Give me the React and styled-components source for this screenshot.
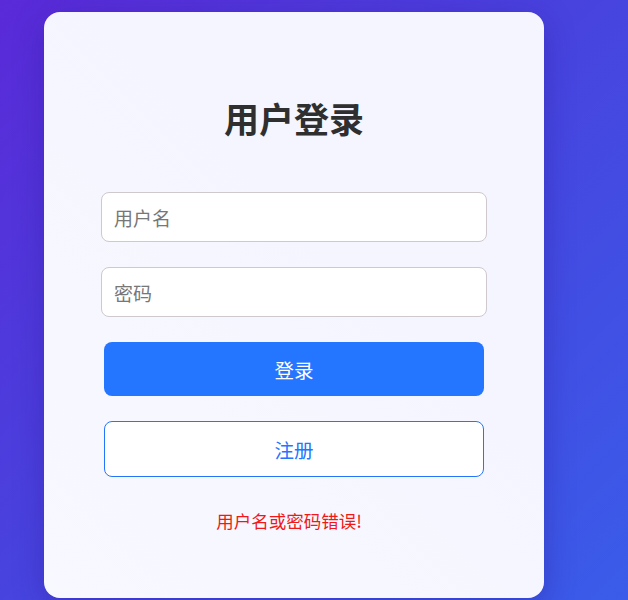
import React, { useState } from 'react'
import styled, { createGlobalStyle } from 'styled-components'

const GlobalStyle = createGlobalStyle`
html, body {
margin:0;
padding:0;
height:100%;
}
body {
font-family:"Noto Sans CJK SC", "Noto Sans", sans-serif;
background:linear-gradient(135deg, #5a2ad8 0%, #4744df 50%, #3a5ce9 100%);
min-height:600px;
}
`

const Page = styled.div`
display:flex;
justify-content:flex-start;
padding:12px 0 0 44px;
box-sizing:border-box;
height:600px;
overflow:hidden;
`

const Card = styled.div`
width:500px;
height:586px;
box-sizing:border-box;
background:linear-gradient(45deg, #f8f9ff 0%, #f5f5ff 60%);
border-radius:16px;
box-shadow:0 8px 30px rgba(40, 20, 140, 0.35);
display:flex;
flex-direction:column;
align-items:center;
padding-top:85px;
`

const Title = styled.h2`
margin:0 0 53px;
font-size:35px;
line-height:42px;
font-weight:700;
color:#2f2f2f;
`

const Form = styled.form`
display:flex;
flex-direction:column;
align-items:center;
gap:25px;
`

const Input = styled.input`
width:386px;
height:50px;
box-sizing:border-box;
padding:0 12px;
border:1px solid #cfc8cc;
border-radius:8px;
background:#fff;
font-family:inherit;
font-size:19px;
color:#333;
outline:none;
&::placeholder {
color:#777;
}
`

const Button = styled.button`
width:380px;
height:${p => (p.$primary ? '54px' : '56px')};
box-sizing:border-box;
border-radius:8px;
font-family:inherit;
font-size:19.5px;
cursor:pointer;
border:${p => (p.$primary ? 'none' : '1px solid #2475fb')};
background:${p => (p.$primary ? '#2475ff' : '#fff')};
color:${p => (p.$primary ? '#fff' : '#2475ff')};
`

const Error = styled.p`
margin:31px 0 0;
padding-right:10px;
font-size:17.5px;
line-height:26px;
color:#f01818;
text-align:center;
`

const App = () => {
    const [username, setUsername] = useState('')
    const [password, setPassword] = useState('')

    const handleLogin = (e) => {
        e.preventDefault()
    }

    return (
        <>
            <GlobalStyle />
            <Page>
                <Card>
                    <Title>用户登录</Title>
                    <Form onSubmit={handleLogin}>
                        <Input type='text' placeholder='用户名' value={username} onChange={(e) => setUsername(e.target.value)} />
                        <Input type='password' placeholder='密码' value={password} onChange={(e) => setPassword(e.target.value)} />
                        <Button type='submit' $primary>登录</Button>
                        <Button type='button'>注册</Button>
                    </Form>
                    <Error>用户名或密码错误!</Error>
                </Card>
            </Page>
        </>
    )
}

export default App
